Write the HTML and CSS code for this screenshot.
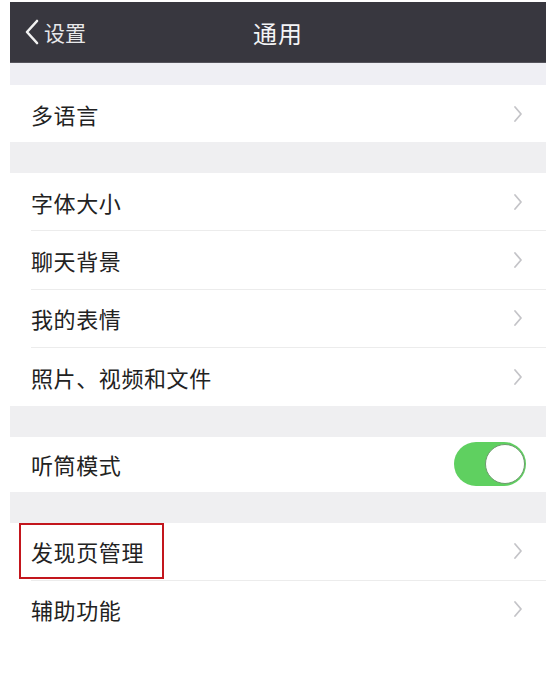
FILE: index.html
```html
<!DOCTYPE html>
<html lang="zh-CN">
<head>
<meta charset="utf-8">
<title>通用</title>
<link rel="stylesheet" href="styles.css">
</head>
<body>
<div class="screen">
  <header class="navbar">
    <div class="back">
      <svg class="back-icon" width="16" height="26" viewBox="0 0 16 26"><path d="M13 2 L3 13 L13 24" fill="none" stroke="#f2f2f2" stroke-width="2.6" stroke-linecap="round" stroke-linejoin="round"/></svg>
      <span>设置</span>
    </div>
    <div class="title">通用</div>
  </header>
  <div class="gap gap-top"></div>
  <section class="group">
    <div class="row"><span class="label">多语言</span><svg class="chev" width="10" height="18" viewBox="0 0 10 18"><path d="M2 2 L8 9 L2 16" fill="none" stroke="#c4c4c8" stroke-width="1.8" stroke-linecap="round" stroke-linejoin="round"/></svg></div>
  </section>
  <div class="gap"></div>
  <section class="group">
    <div class="row"><span class="label">字体大小</span><svg class="chev" width="10" height="18" viewBox="0 0 10 18"><path d="M2 2 L8 9 L2 16" fill="none" stroke="#c4c4c8" stroke-width="1.8" stroke-linecap="round" stroke-linejoin="round"/></svg></div>
    <div class="row"><span class="label">聊天背景</span><svg class="chev" width="10" height="18" viewBox="0 0 10 18"><path d="M2 2 L8 9 L2 16" fill="none" stroke="#c4c4c8" stroke-width="1.8" stroke-linecap="round" stroke-linejoin="round"/></svg></div>
    <div class="row"><span class="label">我的表情</span><svg class="chev" width="10" height="18" viewBox="0 0 10 18"><path d="M2 2 L8 9 L2 16" fill="none" stroke="#c4c4c8" stroke-width="1.8" stroke-linecap="round" stroke-linejoin="round"/></svg></div>
    <div class="row"><span class="label">照片、视频和文件</span><svg class="chev" width="10" height="18" viewBox="0 0 10 18"><path d="M2 2 L8 9 L2 16" fill="none" stroke="#c4c4c8" stroke-width="1.8" stroke-linecap="round" stroke-linejoin="round"/></svg></div>
  </section>
  <div class="gap"></div>
  <section class="group">
    <div class="row row-short"><span class="label">听筒模式</span><span class="toggle"><span class="knob"></span></span></div>
  </section>
  <div class="gap"></div>
  <section class="group">
    <div class="row"><span class="label marked">发现页管理</span><svg class="chev" width="10" height="18" viewBox="0 0 10 18"><path d="M2 2 L8 9 L2 16" fill="none" stroke="#c4c4c8" stroke-width="1.8" stroke-linecap="round" stroke-linejoin="round"/></svg></div>
    <div class="row"><span class="label">辅助功能</span><svg class="chev" width="10" height="18" viewBox="0 0 10 18"><path d="M2 2 L8 9 L2 16" fill="none" stroke="#c4c4c8" stroke-width="1.8" stroke-linecap="round" stroke-linejoin="round"/></svg></div>
  </section>
</div>
</body>
</html>
```
FILE: styles.css
```css
html, body {
  margin: 0;
  padding: 0;
  background: #ffffff;
}
body {
  font-family: "Noto Sans CJK SC", "Noto Sans", sans-serif;
}
.screen {
  margin: 2px 8px 0 10px;
  width: 536px;
}
.navbar {
  height: 60px;
  background: #38373f;
  border-bottom: 1px solid #55545c;
  display: flex;
  align-items: center;
  justify-content: center;
  position: relative;
}
.back {
  position: absolute;
  left: 14px;
  top: 0;
  height: 60px;
  display: flex;
  align-items: center;
  gap: 4px;
  color: #e8e8ea;
  font-size: 21px;
}
.back-icon {
  display: block;
}
.title {
  color: #f4f4f6;
  font-size: 24px;
  letter-spacing: 1px;
}
.gap {
  height: 31px;
  background: #efeff1;
}
.gap-top {
  height: 22px;
  background: #efeff4;
}
.group {
  background: #ffffff;
}
.row {
  height: 58.5px;
  display: flex;
  align-items: center;
  justify-content: space-between;
  margin-left: 21px;
  padding-right: 22px;
  border-top: 1px solid #ececec;
  box-sizing: border-box;
}
.row:first-child {
  border-top: none;
  height: 57px;
}
.row-short:first-child {
  height: 55px;
}
.label {
  font-size: 22px;
  color: #222222;
  letter-spacing: 0.6px;
}
.marked {
  outline: 2px solid #c3161d;
  outline-offset: 0;
  padding: 11px 18px 11px 10px;
  margin-left: -10px;
  line-height: 30px;
}
.chev {
  display: block;
  margin-right: 1px;
}
.toggle {
  width: 72px;
  height: 44px;
  border-radius: 22px;
  background: #5fd060;
  display: flex;
  justify-content: flex-end;
  align-items: center;
  margin-right: -2px;
  box-sizing: border-box;
  padding-right: 1px;
}
.knob {
  width: 40px;
  height: 40px;
  border-radius: 50%;
  background: #ffffff;
  border: 1.5px solid #6e9a6e;
  box-sizing: border-box;
}
```
